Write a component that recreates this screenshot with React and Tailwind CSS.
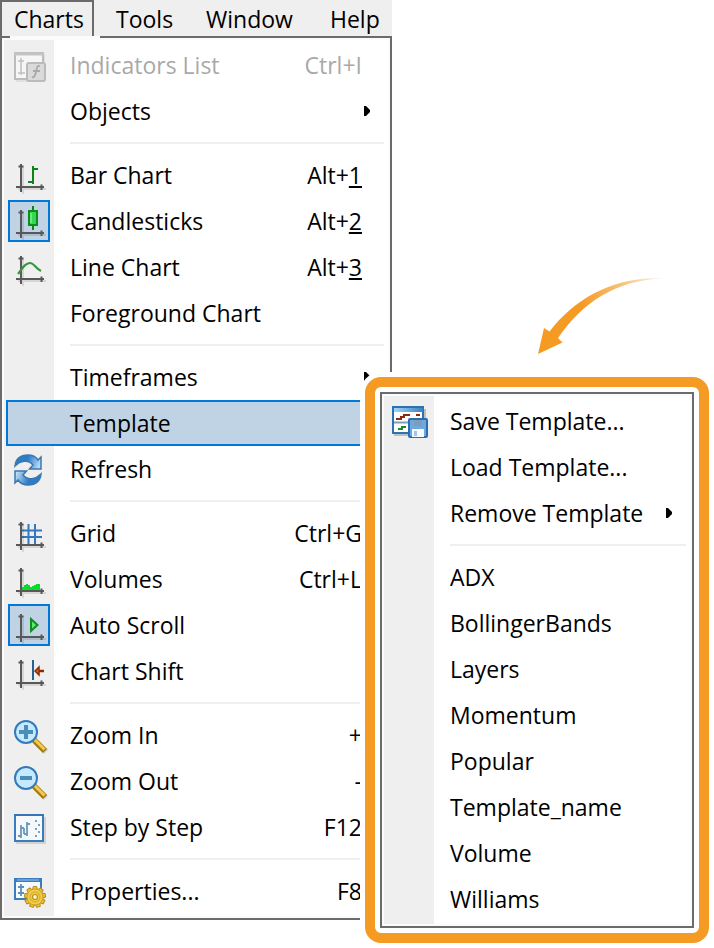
import React from "react";

function IconBox({ children }) {
  return (
    <svg viewBox="0 0 42 42" className="size-full" fill="none" aria-hidden="true">
      {children}
    </svg>
  );
}

function Axes() {
  return (
    <>
      <g stroke="#000" strokeOpacity="0.1" strokeWidth="2" transform="translate(2 2)">
        <path d="M13 10V38M8 33H36" />
      </g>
      <path d="M13 10V38M8 33H36M10.500 12.500H15.500M33.500 30.500V36" stroke="#585858" strokeWidth="2" />
    </>
  );
}

function IndicatorsIcon() {
  return (
    <IconBox>
      <rect x="8" y="10" width="29" height="28" fill="#000" fillOpacity="0.06" />
      <rect x="7" y="9" width="28" height="26" fill="#f6f6f6" stroke="#bcbcbc" strokeWidth="2" />
      <path d="M6 10H36" stroke="#c4c4c4" strokeWidth="3" />
      <path d="M13 14V31M10 17H16M10 29H17" stroke="#c0c0c0" strokeWidth="1.500" />
      <rect x="19" y="19" width="18" height="18" rx="2" fill="#dadada" stroke="#bababa" strokeWidth="2" />
      <path d="M32 22C29 21 29 24 28 28C27 32 26 34 24 33M25 27H32" stroke="#a9a9a9" strokeWidth="1.800" />
    </IconBox>
  );
}

function BarIcon() {
  return (
    <IconBox>
      <Axes />
      <path d="M25 12V30M20 28H25M25 15H30" stroke="#0c8416" strokeWidth="2" />
    </IconBox>
  );
}

function CandleIcon() {
  return (
    <IconBox>
      <Axes />
      <path d="M25 6V30" stroke="#0c8416" strokeWidth="2" />
      <rect x="21" y="11" width="8" height="14" fill="#35d755" stroke="#0c8f18" strokeWidth="2" />
      <path d="M23 13V23" stroke="#7df092" strokeWidth="1.500" />
    </IconBox>
  );
}

function LineIcon() {
  return (
    <IconBox>
      <Axes />
      <path d="M10 28C14 23 17 17 22 17C26 17 28 23 33 25" stroke="#35953f" strokeWidth="2.200" />
    </IconBox>
  );
}

const refreshArrow = "M7 18C8 9 14 7 20 7C25 7 28 9 30 12L33 9V21H21.500L25 17C20 11 12 13 7 18Z";

function RefreshIcon() {
  return (
    <IconBox>
      <defs>
        <linearGradient id="refreshFill" x1="6" y1="8" x2="34" y2="20" gradientUnits="userSpaceOnUse">
          <stop offset="0.450" stopColor="#2f7cc6" />
          <stop offset="0.900" stopColor="#b9dbf5" />
        </linearGradient>
      </defs>
      <g stroke="#3a78b0" strokeWidth="1.500" fill="url(#refreshFill)">
        <path d={refreshArrow} />
        <path d={refreshArrow} transform="rotate(180 20 22)" />
      </g>
    </IconBox>
  );
}

function GridIcon() {
  return (
    <IconBox>
      <path d="M20.500 12V32M27 12V32M13 18.500H34M13 25H34" stroke="#3479bb" strokeWidth="2" />
      <Axes />
    </IconBox>
  );
}

function VolumesIcon() {
  return (
    <IconBox>
      <Axes />
      <path d="M14 32V29H16V27H18V26H20V27H22V29H24V28H26V27H28V26H32V32Z" fill="#0bdc2c" />
    </IconBox>
  );
}

function AutoScrollIcon() {
  return (
    <IconBox>
      <Axes />
      <path d="M23 15V27L29.500 21Z" fill="#5be873" stroke="#118c20" strokeWidth="2" />
    </IconBox>
  );
}

function ShiftIcon() {
  return (
    <IconBox>
      <Axes />
      <path d="M25 10V30" stroke="#246291" strokeWidth="2" />
      <path d="M30 21H36" stroke="#8c2b08" strokeWidth="2.500" />
      <path d="M27 21L31 17V25Z" fill="#f4581a" stroke="#8c2b08" strokeWidth="1.500" />
    </IconBox>
  );
}

function ZoomIcon({ plus }) {
  return (
    <IconBox>
      <path d="M28 28L38 38" stroke="#000" strokeOpacity="0.12" strokeWidth="6" />
      <path d="M26 26L37 37" stroke="#a67a12" strokeWidth="6" />
      <path d="M26.500 25.500L36.500 35.500" stroke="#f2cc4a" strokeWidth="3" />
      <circle cx="18" cy="18" r="11" fill="#c5eaff" stroke="#3279bd" strokeWidth="2" />
      <path d={plus ? "M11 18H25M18 11V25" : "M12 18H24"} stroke="#4a8eb8" strokeWidth="4" />
    </IconBox>
  );
}

function StepIcon() {
  return (
    <IconBox>
      <path d="M8 37H37V11" stroke="#000" strokeOpacity="0.12" strokeWidth="2" />
      <rect x="7" y="9" width="28" height="26" fill="#f5f9fc" stroke="#3a7cbc" strokeWidth="2" />
      <path d="M6 9H36" stroke="#3575b5" strokeWidth="2" />
      <path d="M13 19V32M10 30H13M13 22H16M16 22V28M19 16V30M16 28H19M19 18H22" stroke="#6c98bb" strokeWidth="1.800" />
      <path d="M28 14V16M31 18V20M28 22V24M31 25V27M28 29V31" stroke="#7ba2c1" strokeWidth="2" />
    </IconBox>
  );
}

const teeth = [0, 40, 80, 120, 160, 200, 240, 280, 320];

function PropertiesIcon() {
  return (
    <IconBox>
      <rect x="7" y="9" width="26" height="20" fill="#f5fafe" stroke="#3a7cbc" strokeWidth="2" />
      <path d="M6 10H34" stroke="#3a7cbc" strokeWidth="4" />
      <path d="M9 10H31" stroke="#8fc8f3" strokeWidth="1" />
      <path d="M13 14V26M10 17H16M10 23H16" stroke="#5d8fb8" strokeWidth="1.800" />
      <g transform="translate(27 27)">
        {teeth.map((angle) => (
          <path key={angle} d="M-2.500 -7L-1.800 -10.500H1.800L2.500 -7Z" fill="#e9c03a" stroke="#b88c1e" strokeWidth="1" transform={`rotate(${angle})`} />
        ))}
        <circle r="8" fill="#f2cf45" stroke="#cda02a" strokeWidth="1" />
        <circle r="5" stroke="#dcb232" strokeWidth="1.500" />
        <circle r="2.500" fill="#fff3c4" stroke="#b88c1e" strokeWidth="1.200" />
      </g>
    </IconBox>
  );
}

function SaveIcon() {
  return (
    <IconBox>
      <defs>
        <linearGradient id="saveTitle" x1="4" y1="0" x2="36" y2="0" gradientUnits="userSpaceOnUse">
          <stop stopColor="#a8dcfa" />
          <stop offset="1" stopColor="#3a7cbc" />
        </linearGradient>
      </defs>
      <path d="M6 35H22M37 9V20" stroke="#000" strokeOpacity="0.2" strokeWidth="2" />
      <rect x="5" y="7" width="30" height="26" fill="#fff" stroke="#2f72b4" strokeWidth="2" />
      <rect x="6" y="8" width="29" height="4" fill="url(#saveTitle)" />
      <path d="M6 22.500H34" stroke="#7d9db8" strokeWidth="2" />
      <path d="M8 19H13V17H16V15H22M28 15H32" stroke="#8a2a10" strokeWidth="2" />
      <path d="M10 29H14V27H18" stroke="#1c8a26" strokeWidth="2" />
      <rect x="21" y="19" width="18" height="18" rx="1" fill="#6fa8de" stroke="#2c6cb0" strokeWidth="2" />
      <rect x="26" y="20" width="8" height="6" fill="#7f9db8" />
      <rect x="24" y="29" width="12" height="8" fill="#f4faff" />
      <rect x="26" y="31" width="3" height="5" fill="#9cc6ec" />
    </IconBox>
  );
}

function MenuItem({ label, icon, shortcut, mnemonic, submenu, disabled, checked, active }) {
  return (
    <li role="none">
      <button
        type="button"
        role="menuitem"
        disabled={disabled}
        className={`flex h-[46px] w-full items-center border-2 text-left ${
          active ? "border-[#0078d7] bg-[#bfd3e4]" : "border-transparent"
        } ${disabled ? "text-[#a9a9a9]" : "text-black"}`}
      >
        <span className={`mr-5 size-[42px] shrink-0 ${checked ? "bg-[#bfd3e4] outline-2 -outline-offset-2 outline-[#0078d7]" : ""}`}>
          {icon}
        </span>
        <span className="flex-1 whitespace-nowrap">{label}</span>
        {shortcut && (
          <span className="mr-[22px] whitespace-nowrap">
            {shortcut}
            {mnemonic && <span className="underline decoration-2 underline-offset-2">{mnemonic}</span>}
          </span>
        )}
        {submenu && (
          <svg viewBox="0 0 6 10" className="mr-3.5 h-2.5 w-1.5" aria-hidden="true">
            <path d="M0 0H2L6 4V6L2 10H0Z" fill="#000" />
          </svg>
        )}
      </button>
    </li>
  );
}

function Menu({ items, label, children }) {
  return (
    <div className="relative border-2 border-[#6b6b6b] bg-[#fbfbfb] p-0.5">
      {children}
      <ul
        role="menu"
        aria-label={label}
        className="bg-[linear-gradient(to_right,#efefef_50px,#ffffff_50px)] p-0.5"
      >
        {items.map((item, index) =>
          item === null ? (
            <li key={index} role="separator" className="mr-0.5 ml-16 flex h-[18px] items-center">
              <span className="h-0.5 w-full bg-[#efefef]" />
            </li>
          ) : (
            <MenuItem key={item.label} {...item} />
          )
        )}
      </ul>
    </div>
  );
}

const chartItems = [
  { label: "Indicators List", shortcut: "Ctrl+I", icon: <IndicatorsIcon />, disabled: true },
  { label: "Objects", submenu: true },
  null,
  { label: "Bar Chart", shortcut: "Alt+", mnemonic: "1", icon: <BarIcon /> },
  { label: "Candlesticks", shortcut: "Alt+", mnemonic: "2", icon: <CandleIcon />, checked: true },
  { label: "Line Chart", shortcut: "Alt+", mnemonic: "3", icon: <LineIcon /> },
  { label: "Foreground Chart" },
  null,
  { label: "Timeframes", submenu: true },
  { label: "Template", submenu: true, active: true },
  { label: "Refresh", icon: <RefreshIcon /> },
  null,
  { label: "Grid", shortcut: "Ctrl+G", icon: <GridIcon /> },
  { label: "Volumes", shortcut: "Ctrl+L", icon: <VolumesIcon /> },
  { label: "Auto Scroll", icon: <AutoScrollIcon />, checked: true },
  { label: "Chart Shift", icon: <ShiftIcon /> },
  null,
  { label: "Zoom In", shortcut: "+", icon: <ZoomIcon plus /> },
  { label: "Zoom Out", shortcut: "-", icon: <ZoomIcon /> },
  { label: "Step by Step", shortcut: "F12", icon: <StepIcon /> },
  null,
  { label: "Properties...", shortcut: "F8", icon: <PropertiesIcon /> },
];

const templateItems = [
  { label: "Save Template...", icon: <SaveIcon /> },
  { label: "Load Template..." },
  { label: "Remove Template", submenu: true },
  null,
  { label: "ADX" },
  { label: "BollingerBands" },
  { label: "Layers" },
  { label: "Momentum" },
  { label: "Popular" },
  { label: "Template_name" },
  { label: "Volume" },
  { label: "Williams" },
];

function PointerArrow() {
  return (
    <svg viewBox="0 0 130 80" className="absolute top-[276px] left-[536px] h-20 w-[130px]" aria-hidden="true">
      <defs>
        <linearGradient id="pointerFade" x1="10" y1="60" x2="128" y2="2" gradientUnits="userSpaceOnUse">
          <stop offset="0.350" stopColor="#f59b23" />
          <stop offset="0.700" stopColor="#f59b23" stopOpacity="0.600" />
          <stop offset="1" stopColor="#f59b23" stopOpacity="0.100" />
        </linearGradient>
      </defs>
      <path d="M2 78L8 52L13.500 55.500C38 24 76 0 128 2.500C80 4 47 26 22 62L26.500 66.500Z" fill="url(#pointerFade)" />
    </svg>
  );
}

export default function App() {
  return (
    <main className="relative min-h-screen w-full overflow-hidden bg-white font-['Open_Sans','Noto_Sans',sans-serif] text-[23px] leading-8 text-black">
      <div className="w-[392px]">
        <nav className="flex h-9 bg-[#efefef]" aria-label="Menu bar">
          <button type="button" className="w-[94px] border-2 border-b-0 border-[#6b6b6b] pl-3 text-left">Charts</button>
          <button type="button" className="w-[90px] border-t-2 border-transparent pl-[22px] text-left">Tools</button>
          <button type="button" className="w-[124px] border-t-2 border-transparent pl-[22px] text-left">Window</button>
          <button type="button" className="border-t-2 border-transparent pl-[22px] text-left">Help</button>
        </nav>
        <Menu items={chartItems} label="Charts">
          <span className="absolute -top-0.5 left-2 h-0.5 w-[90px] bg-[#fbfbfb]" />
        </Menu>
      </div>
      <PointerArrow />
      <div className="absolute top-[377px] left-[365px] w-[344px] rounded-2xl border-10 border-[#f59b23] bg-white p-[5px] shadow-[0_0_0_5px_#ffffff]">
        <Menu items={templateItems} label="Template" />
      </div>
    </main>
  );
}
